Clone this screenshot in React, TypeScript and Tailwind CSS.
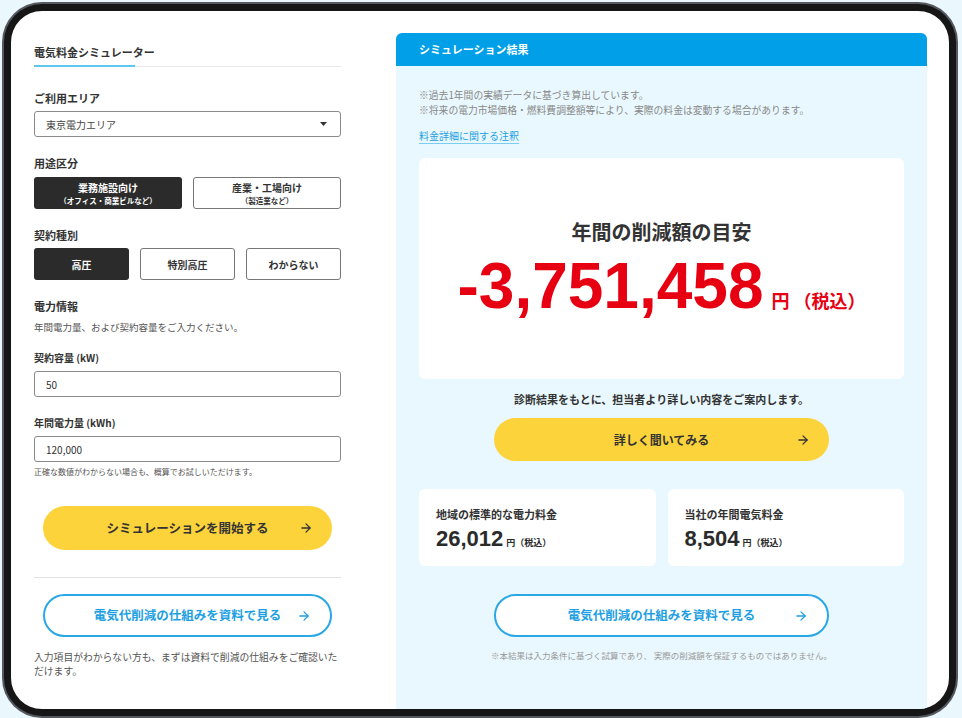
import { ArrowRight } from 'lucide-react';

// ─── Shared bits ──────────────────────────────────────────────────────────────

const JP = { fontFamily: '"Noto Sans CJK JP", "Noto Sans", sans-serif' };
const NUM = { fontFamily: '"Liberation Sans", Arial, "Noto Sans CJK JP", sans-serif' };

function Label({ children, className = '' }: { children: React.ReactNode; className?: string }) {
  return <p className={`text-[11px] leading-4 font-bold text-[#333] ${className}`}>{children}</p>;
}

function PillButton({ variant, label, className = '', textClass = '' }: { variant: 'yellow' | 'blue'; label: string; className?: string; textClass?: string }) {
  const base = variant === 'yellow'
    ? 'bg-[#fdd33b] text-[#333]'
    : 'bg-white border-2 border-[#2aa8e6] text-[#1e9fe2]';
  return (
    <button className={`relative flex items-center justify-center rounded-full font-bold ${base} ${className}`}>
      <span className={textClass}>{label}</span>
      <ArrowRight className="absolute right-[19px] top-1/2 -translate-y-1/2 w-[14px] h-[14px]" strokeWidth={2.2} />
    </button>
  );
}

// ─── Left: simulator form ─────────────────────────────────────────────────────

function SimulatorForm() {
  return (
    <div className="w-[307px] shrink-0 flex flex-col pt-[11px]">
      <p className="text-[11px] leading-4 font-bold text-[#333]">電気料金シミュレーター</p>
      <div className="flex items-end mt-[5px]">
        <div className="w-[101px] h-[2px] bg-[#5fc6ef]" />
        <div className="flex-1 h-px bg-[#e8e8e8]" />
      </div>

      <Label className="mt-[23px]">ご利用エリア</Label>
      <div className="mt-[5px] h-[26px] border border-[#8a8a8a] rounded-[3px] flex items-center justify-between pl-[11px] pr-[13px]">
        <span className="text-[10px] text-[#444]">東京電力エリア</span>
        <svg width="7" height="4" viewBox="0 0 7 4"><path d="M0 0h7L3.5 4z" fill="#333" /></svg>
      </div>

      <Label className="mt-[18px]">用途区分</Label>
      <div className="mt-[6px] grid grid-cols-2 gap-[11px]">
        <div className="h-[32px] rounded-[3px] bg-[#2b2b2b] flex flex-col items-center justify-center text-white">
          <span className="text-[10px] leading-[14px] font-bold">業務施設向け</span>
          <span className="text-[7.5px] leading-[11px] font-bold">（オフィス・商業ビルなど）</span>
        </div>
        <div className="h-[32px] rounded-[3px] border border-[#777] flex flex-col items-center justify-center text-[#333]">
          <span className="text-[10px] leading-[14px] font-bold">産業・工場向け</span>
          <span className="text-[7.5px] leading-[11px] font-bold">（製造業など）</span>
        </div>
      </div>

      <Label className="mt-[18px]">契約種別</Label>
      <div className="mt-[5px] grid grid-cols-3 gap-[11px]">
        <div className="h-[32px] rounded-[3px] bg-[#2b2b2b] flex items-center justify-center text-white text-[10px] font-bold">高圧</div>
        <div className="h-[32px] rounded-[3px] border border-[#777] flex items-center justify-center text-[#333] text-[10px] font-bold">特別高圧</div>
        <div className="h-[32px] rounded-[3px] border border-[#777] flex items-center justify-center text-[#333] text-[10px] font-bold">わからない</div>
      </div>

      <Label className="mt-[18px]">電力情報</Label>
      <p className="mt-[6px] text-[9.5px] leading-[14px] text-[#555]">年間電力量、および契約容量をご入力ください。</p>

      <p className="mt-[17px] text-[10px] leading-[14px] font-bold text-[#333]">契約容量 (kW)</p>
      <div className="mt-[6px] h-[26px] border border-[#8a8a8a] rounded-[3px] flex items-center pl-[11px] text-[10px] text-[#333]">50</div>

      <p className="mt-[19px] text-[10px] leading-[14px] font-bold text-[#333]">年間電力量 (kWh)</p>
      <div className="mt-[6px] h-[26px] border border-[#8a8a8a] rounded-[3px] flex items-center pl-[11px] text-[10px] text-[#333]">120,000</div>
      <p className="mt-[4px] text-[8px] leading-[12px] text-[#555]">正確な数値がわからない場合も、概算でお試しいただけます。</p>

      <PillButton variant="yellow" label="シミュレーションを開始する" className="mt-[28px] mx-[9px] h-[44px]" textClass="text-[12.5px]" />

      <div className="mt-[27px] h-px bg-[#e3e3e3]" />

      <PillButton variant="blue" label="電気代削減の仕組みを資料で見る" className="mt-[16px] mx-[9px] h-[43px]" textClass="text-[12.5px]" />

      <p className="mt-[13px] text-[9.8px] leading-[14px] text-[#555]">入力項目がわからない方も、まずは資料で削減の仕組みをご確認いただけます。</p>
    </div>
  );
}

// ─── Right: result panel ──────────────────────────────────────────────────────

function SubResult({ label, value }: { label: string; value: string }) {
  return (
    <div className="h-[77px] rounded-[6px] bg-white pl-[17px] pt-[18px]">
      <p className="text-[11px] leading-[15px] font-bold text-[#333]">{label}</p>
      <div className="mt-[5px] flex items-baseline gap-[3px] text-[#2b2b2b]">
        <span className="text-[22px] leading-[24px] font-bold" style={NUM}>{value}</span>
        <span className="text-[9px] font-bold">円（税込）</span>
      </div>
    </div>
  );
}

function ResultPanel() {
  return (
    <div className="flex-1 flex flex-col rounded-t-[6px] overflow-hidden">
      <div className="h-[33px] bg-[#009fe8] flex items-center pl-[23px]">
        <span className="text-[11px] font-bold text-white">シミュレーション結果</span>
      </div>
      <div className="flex-1 bg-[#e9f8fe] px-[23px] pt-[22px] pb-[40px] flex flex-col">
        <p className="text-[9.8px] leading-[15px] text-[#888]">※過去1年間の実績データに基づき算出しています。</p>
        <p className="text-[9.8px] leading-[15px] text-[#888]">※将来の電力市場価格・燃料費調整額等により、実際の料金は変動する場合があります。</p>
        <a className="mt-[10px] self-start text-[10px] leading-[15px] text-[#1e9fe2] underline decoration-[#7ccdf2] underline-offset-[3px]">料金詳細に関する注釈</a>

        <div className="mt-[15px] h-[221px] rounded-[6px] bg-white flex flex-col items-center justify-center pb-[2px]">
          <p className="text-[20px] leading-[28px] font-bold text-[#333]">年間の削減額の目安</p>
          <div className="mt-[8px] flex items-baseline text-[#e60012]">
            <span className="text-[64px] leading-[64px] font-bold" style={NUM}>-3,751,458</span>
            <span className="ml-[8px] text-[18px] font-bold">円</span>
            <span className="ml-[4px] text-[18px] font-bold">（税込）</span>
          </div>
        </div>

        <p className="mt-[12px] text-center text-[11px] leading-4 font-bold text-[#333]">診断結果をもとに、担当者より詳しい内容をご案内します。</p>
        <PillButton variant="yellow" label="詳しく聞いてみる" className="mt-[11px] self-center w-[335px] h-[43px]" textClass="text-[12px]" />

        <div className="mt-[28px] grid grid-cols-2 gap-[12px]">
          <SubResult label="地域の標準的な電力料金" value="26,012" />
          <SubResult label="当社の年間電気料金" value="8,504" />
        </div>

        <PillButton variant="blue" label="電気代削減の仕組みを資料で見る" className="mt-[28px] self-center w-[335px] h-[43px]" textClass="text-[12.5px]" />
        <p className="mt-[12px] text-center text-[8.5px] leading-[13px] text-[#999]">※本結果は入力条件に基づく試算であり、 実際の削減額を保証するものではありません。</p>
      </div>
    </div>
  );
}

// ─── App ──────────────────────────────────────────────────────────────────────

export default function App() {
  return (
    <div className="w-[962px] h-[718px] overflow-hidden bg-[#eaf7fd] pl-[2px] pt-[2px]" style={JP}>
      <div className="w-[956px] h-[716px] rounded-[40px] bg-[#555860] p-[2px]">
        <div className="w-full h-full rounded-[38px] bg-[#161616] p-[7px]">
          <div className="w-full h-full rounded-[31px] bg-white overflow-hidden flex gap-[55px] pl-[23px] pr-[22px] pt-[22px]">
            <SimulatorForm />
            <ResultPanel />
          </div>
        </div>
      </div>
    </div>
  );
}
